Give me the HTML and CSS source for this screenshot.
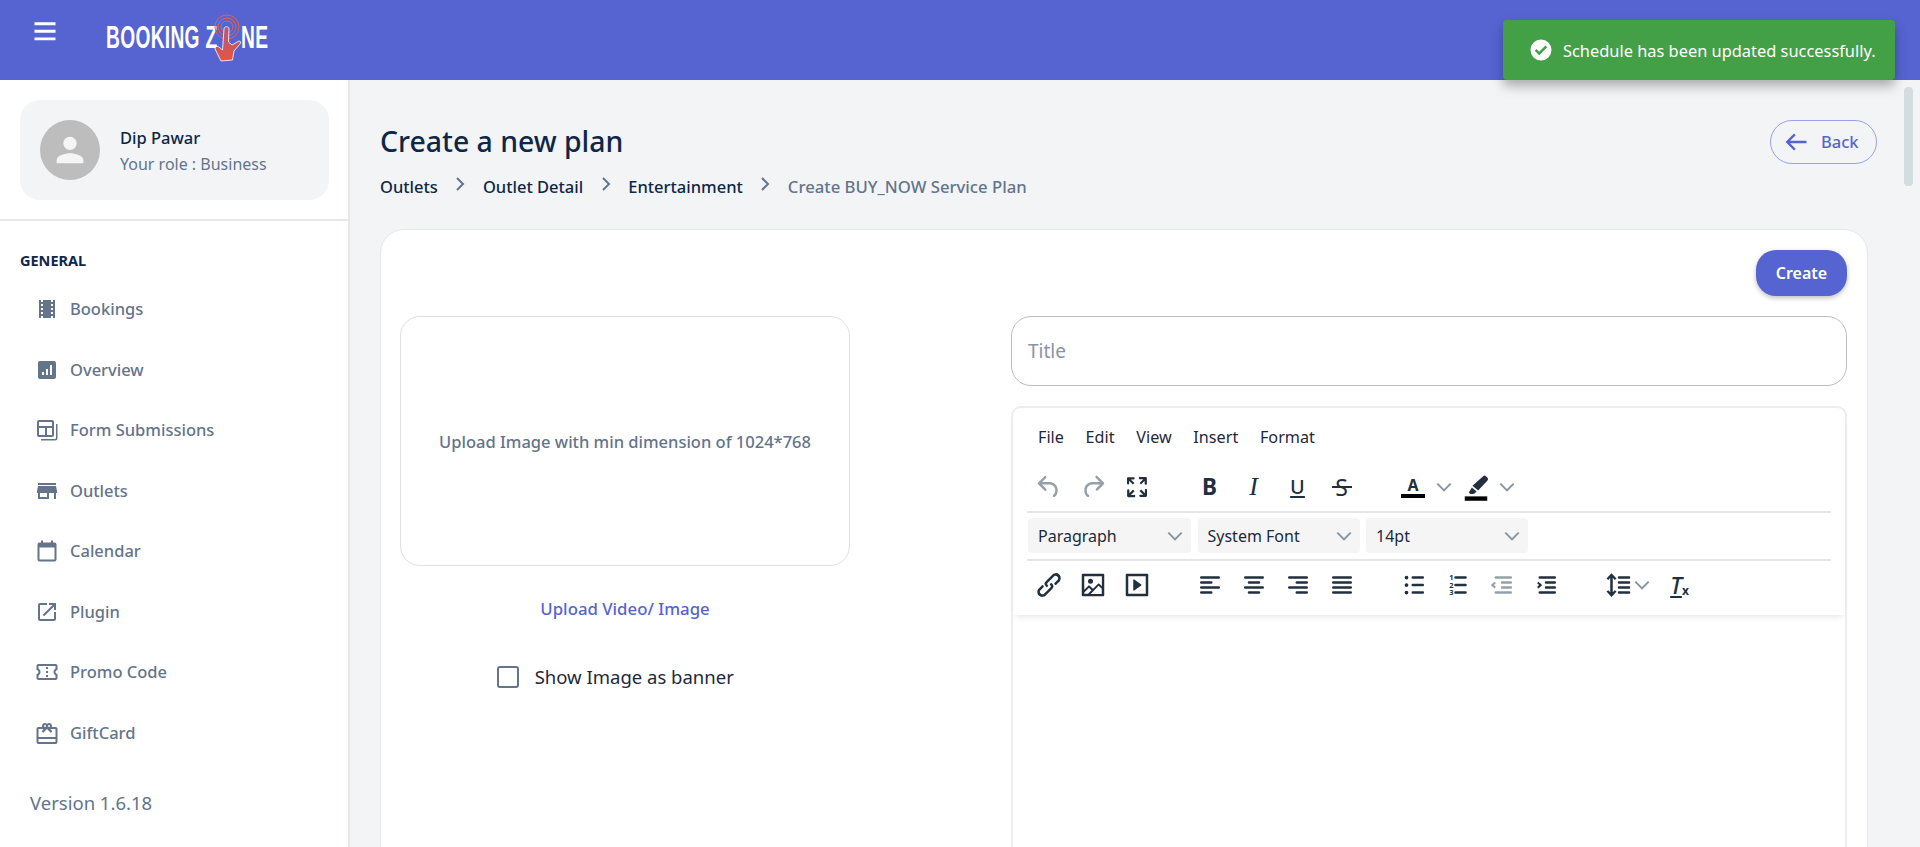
FILE: index.html
```html
<!DOCTYPE html>
<html>
<head>
	<meta charset="utf-8">
	<title>Create a new plan</title>
	<link rel="stylesheet" href="styles.css">
</head>
<body>
<header class="topbar">
	<svg class="burger" viewBox="0 0 24 24"><path d="M3 4.500h18V7H3zM3 11h18v2.500H3zM3 17.500h18V20H3z"/></svg>
	<div class="logo">
		<span class="logoText first">BOOKING Z</span>
		<span class="logoText second">NE</span>
		<svg class="logoHand" viewBox="0 0 30 48">
			<defs>
				<linearGradient id="handFill" x1="0" y1="0" x2="0" y2="1">
					<stop offset="0" stop-color="#a85a8c"/>
					<stop offset="1" stop-color="#e8553c"/>
				</linearGradient>
			</defs>
			<g fill="none" stroke="#e8604a" stroke-width="1">
				<circle cx="15" cy="13" r="12"/>
				<circle cx="15" cy="13" r="9"/>
				<circle cx="15" cy="13" r="6"/>
			</g>
			<path d="M12 15C12 12 17 12 17 15L16.500 28 20 31 27 27C29 27 29 29 28 30L22 37 20.500 46 9 47 3 35C3 32 6 32 7 33L10.500 36z" fill="url(#handFill)" stroke="#fff" stroke-width=".8"/>
		</svg>
	</div>
</header>

<div class="layout">
	<aside class="sidebar">
		<div class="profileWrap">
			<div class="profile">
				<div class="avatar">
					<svg viewBox="0 0 24 24"><path d="M12 12c2.200 0 4-1.800 4-4s-1.800-4-4-4-4 1.800-4 4 1.800 4 4 4zm0 2c-2.700 0-8 1.300-8 4v2h16v-2c0-2.700-5.300-4-8-4z"/></svg>
				</div>
				<div class="profileText">
					<div class="profileName">Dip Pawar</div>
					<div class="profileRole">Your role : Business</div>
				</div>
			</div>
		</div>
		<div class="navTitle">GENERAL</div>
		<ul class="nav">
			<li><svg viewBox="0 0 24 24"><path d="M18 3v2h-2V3H8v2H6V3H4v18h2v-2h2v2h8v-2h2v2h2V3h-2zM8 17H6v-2h2v2zm0-4H6v-2h2v2zm0-4H6V7h2v2zm10 8h-2v-2h2v2zm0-4h-2v-2h2v2zm0-4h-2V7h2v2z"/></svg>Bookings</li>
			<li><svg viewBox="0 0 24 24"><path d="M19 3H5c-1.100 0-2 .9-2 2v14c0 1.100.9 2 2 2h14c1.100 0 2-.9 2-2V5c0-1.100-.9-2-2-2zM9 17H7v-3h2v3zm4 0h-2v-6h2v6zm4 0h-2V7h2v10z"/></svg>Overview</li>
			<li><svg viewBox="0 0 24 24"><path d="M4 2h13a2 2 0 012 2v13a2 2 0 01-2 2H4a2 2 0 01-2-2V4a2 2 0 012-2zm0 2v4h13V4H4zm0 6v7h6v-7H4zm8 0v7h5v-7h-5zM21 6h1.500v14a2.500 2.500 0 01-2.500 2.500H6V21h14a1 1 0 001-1V6z"/></svg>Form Submissions</li>
			<li><svg viewBox="0 0 24 24"><path d="M21 4H3v2h18V4zm1 10v-2l-1-5H3l-1 5v2h1v6h11v-6h5v6h2v-6h1zm-10 4H5v-4h7v4z"/></svg>Outlets</li>
			<li><svg viewBox="0 0 24 24"><path d="M19.500 3.500H18V1.500h-2v2H8v-2H6v2H4.500c-1.100 0-2 .9-2 2v15c0 1.100.9 2 2 2h15c1.100 0 2-.9 2-2v-15c0-1.100-.9-2-2-2zm0 17h-15V8.500h15v12z"/></svg>Calendar</li>
			<li><svg viewBox="0 0 24 24"><path d="M19 19H5V5h7V3H5a2 2 0 00-2 2v14a2 2 0 002 2h14c1.100 0 2-.9 2-2v-7h-2v7zM14 3v2h3.590l-9.830 9.830 1.410 1.410L19 6.410V10h2V3h-7z"/></svg>Plugin</li>
			<li><svg viewBox="0 0 24 24"><path d="M22.500 10V6c0-1.100-.9-2-2-2h-17c-1.100 0-2 .9-2 2v4c1.100 0 2 .9 2 2s-.9 2-2 2v4c0 1.100.9 2 2 2h17c1.100 0 2-.9 2-2v-4c-1.100 0-2-.9-2-2s.9-2 2-2zm-2-1.460c-1.200.69-2 2-2 3.460s.8 2.770 2 3.460V18h-17v-2.540c1.200-.69 2-2 2-3.460s-.8-2.770-2-3.460V6h17v2.540zM11 15h2v2h-2zm0-4h2v2h-2zm0-4h2v2h-2z"/></svg>Promo Code</li>
			<li><svg viewBox="0 0 24 24"><path d="M20.500 6h-3.700c.1-.3.200-.6.200-1 0-1.700-1.300-3-3-3-.9 0-1.500.4-2 1-.5-.6-1.100-1-2-1-1.700 0-3 1.300-3 3 0 .4.100.7.200 1H3.500c-1.100 0-2 .9-2 2v13c0 1.100.9 2 2 2h17c1.100 0 2-.9 2-2V8c0-1.100-.9-2-2-2zM14 4a1 1 0 110 2 1 1 0 010-2zm-4 0a1 1 0 110 2 1 1 0 010-2zm10.500 17h-17v-3h17v3zm0-5h-17V8h5l-1.800 2.600 1.600 1.200L12 8l3.700 3.800 1.600-1.200L15.500 8h5v8z"/></svg>GiftCard</li>
		</ul>
		<div class="version">Version 1.6.18</div>
	</aside>

	<main class="content">
		<div class="pageHead">
			<div>
				<h1>Create a new plan</h1>
				<div class="crumbs">
					<a>Outlets</a>
					<svg viewBox="0 0 16 16"><path d="M5 2l6 6-6 6"/></svg>
					<a>Outlet Detail</a>
					<svg viewBox="0 0 16 16"><path d="M5 2l6 6-6 6"/></svg>
					<a>Entertainment</a>
					<svg viewBox="0 0 16 16"><path d="M5 2l6 6-6 6"/></svg>
					<span>Create BUY_NOW Service Plan</span>
				</div>
			</div>
			<button class="backBtn">
				<svg viewBox="0 0 24 24"><path d="M21 12H5M11 5.500L4.500 12l6.500 6.500"/></svg>
				Back
			</button>
		</div>

		<section class="card">
			<div class="cardHead"><button class="createBtn">Create</button></div>
			<div class="formCols">
				<div class="leftCol">
					<div class="dropBox">Upload Image with min dimension of 1024*768</div>
					<a class="uploadLink">Upload Video/ Image</a>
					<label class="bannerCheck"><i class="box"></i>Show Image as banner</label>
				</div>
				<div class="rightCol">
					<div class="titleInput">Title</div>
					<div class="editor">
						<div class="toolbarWrap">
							<div class="menuRow">
								<span>File</span><span>Edit</span><span>View</span><span>Insert</span><span>Format</span>
							</div>
							<div class="toolRow line">
								<div class="group">
									<b class="tb off"><svg viewBox="0 0 24 24"><path d="M6.400 8H12c3.700 0 6.200 2 6.800 5.100.6 2.700-.4 5.600-2.300 6.800a1 1 0 01-1-1.800c1.100-.6 1.800-2.700 1.400-4.600-.5-2.100-2.100-3.500-4.900-3.500H6.400l3.300 3.300a1 1 0 11-1.400 1.400l-5-5a1 1 0 010-1.400l5-5a1 1 0 011.400 1.400L6.400 8z"/></svg></b>
									<b class="tb off"><svg viewBox="0 0 24 24"><path d="M17.600 10H12c-2.800 0-4.400 1.400-4.900 3.500-.4 2 .3 4 1.400 4.600a1 1 0 11-1 1.800c-2-1.200-2.900-4.100-2.300-6.800.6-3 3-5.100 6.800-5.100h5.600l-3.300-3.300a1 1 0 111.400-1.400l5 5a1 1 0 010 1.400l-5 5a1 1 0 01-1.400-1.400l3.300-3.300z"/></svg></b>
									<b class="tb"><svg viewBox="0 0 24 24"><path d="M15.300 10l-1.200-1.300 2.900-3h-2.300a.9.9 0 110-1.700H19c.5 0 .9.400.9.900v4.400a.9.9 0 11-1.800 0V7l-2.900 3zm0 4l3 3v-2.300a.9.9 0 111.700 0V19c0 .5-.4.900-.9.900h-4.400a.9.9 0 110-1.800H17l-3-2.900 1.300-1.200zM10 15.400l-2.900 3h2.300a.9.9 0 110 1.700H5a.9.9 0 01-.9-.9v-4.400a.9.9 0 111.800 0V17l2.900-3 1.200 1.300zM8.700 10L5.700 7v2.300a.9.9 0 01-1.700 0V5c0-.5.4-.9.900-.9h4.400a.9.9 0 010 1.800H7l3 2.900-1.300 1.200z"/></svg></b>
								</div>
								<div class="group">
									<b class="tb gl glBold">B</b>
									<b class="tb gl glItalic">I</b>
									<b class="tb gl glUnder">U</b>
									<b class="tb gl glStrike">S</b>
								</div>
								<div class="group">
									<b class="tb split"><span class="colorA">A</span><svg class="chev" viewBox="0 0 12 12"><path d="M1 3.500L6 8.500l5-5"/></svg></b>
									<b class="tb split"><svg viewBox="0 0 24 24"><path d="M17.700 3.300a1.500 1.500 0 012.200 0l1.300 1.300a1.500 1.500 0 010 2.100l-7.500 8-4.500-3.800zM8.700 12.300l3.800 3.300-1.700 1.500-1.300.4-1.900.1-1.400-1.300z"/><path d="M3 19.500h18V23H3z" class="black"/></svg><svg class="chev" viewBox="0 0 12 12"><path d="M1 3.500L6 8.500l5-5"/></svg></b>
								</div>
							</div>
							<div class="selectRow line">
								<div class="pick w163">Paragraph<svg class="chev" viewBox="0 0 12 12"><path d="M1 3.500L6 8.500l5-5"/></svg></div>
								<div class="pick w162">System Font<svg class="chev" viewBox="0 0 12 12"><path d="M1 3.500L6 8.500l5-5"/></svg></div>
								<div class="pick w162">14pt<svg class="chev" viewBox="0 0 12 12"><path d="M1 3.500L6 8.500l5-5"/></svg></div>
							</div>
							<div class="toolRow">
								<div class="group">
									<b class="tb"><svg viewBox="0 0 24 24"><path d="M6.200 12.300a1 1 0 011.400 1.400l-2 2a2 2 0 102.800 2.800l4.800-4.800a1 1 0 000-1.400 1 1 0 111.400-1.300 2.900 2.900 0 010 4.100l-4.800 4.800a4 4 0 11-5.600-5.600l2-2zm11.600-.6a1 1 0 01-1.400-1.400l2-2a2 2 0 10-2.800-2.800l-4.800 4.800a1 1 0 000 1.400 1 1 0 11-1.400 1.300 2.900 2.900 0 010-4.100l4.800-4.800a4 4 0 115.600 5.600l-2 2z"/></svg></b>
									<b class="tb"><svg viewBox="0 0 24 24"><path d="M5 15.700l3.300-3.200c.3-.3.700-.3 1 0L12 15l4.100-4c.3-.4.800-.4 1 0l2 1.900V5H5v10.700zM5 18V19h3l2.800-2.900-2-2L5 17.900zm14-3l-2.500-2.400-6.400 6.500H19v-4zM4 3h16c.6 0 1 .4 1 1v16c0 .6-.4 1-1 1H4a1 1 0 01-1-1V4c0-.6.4-1 1-1zm6 8a2 2 0 110-4 2 2 0 010 4z"/></svg></b>
									<b class="tb"><svg viewBox="0 0 24 24"><path d="M4 3h16c.6 0 1 .4 1 1v16c0 .6-.4 1-1 1H4a1 1 0 01-1-1V4c0-.6.4-1 1-1zm1 2v14h14V5H5zm4.800 2.600l5.600 4a.5.5 0 010 .8l-5.600 4A.5.5 0 019 16V8a.5.5 0 01.800-.4z"/></svg></b>
								</div>
								<div class="group">
									<b class="tb"><svg viewBox="0 0 24 24"><path d="M5 5h14a1 1 0 010 2H5a1 1 0 010-2zm0 4h8a1 1 0 010 2H5a1 1 0 010-2zm0 8h8a1 1 0 010 2H5a1 1 0 010-2zm0-4h14a1 1 0 010 2H5a1 1 0 010-2z"/></svg></b>
									<b class="tb"><svg viewBox="0 0 24 24"><path d="M5 5h14a1 1 0 010 2H5a1 1 0 010-2zm3 4h8a1 1 0 010 2H8a1 1 0 010-2zm0 8h8a1 1 0 010 2H8a1 1 0 010-2zm-3-4h14a1 1 0 010 2H5a1 1 0 010-2z"/></svg></b>
									<b class="tb"><svg viewBox="0 0 24 24"><path d="M5 5h14a1 1 0 010 2H5a1 1 0 010-2zm6 4h8a1 1 0 010 2h-8a1 1 0 010-2zm0 8h8a1 1 0 010 2h-8a1 1 0 010-2zm-6-4h14a1 1 0 010 2H5a1 1 0 010-2z"/></svg></b>
									<b class="tb"><svg viewBox="0 0 24 24"><path d="M5 5h14a1 1 0 010 2H5a1 1 0 010-2zm0 4h14a1 1 0 010 2H5a1 1 0 010-2zm0 4h14a1 1 0 010 2H5a1 1 0 010-2zm0 4h14a1 1 0 010 2H5a1 1 0 010-2z"/></svg></b>
								</div>
								<div class="group">
									<b class="tb"><svg viewBox="0 0 24 24"><path d="M11 5h8c.6 0 1 .4 1 1s-.4 1-1 1h-8a1 1 0 010-2zm0 6h8c.6 0 1 .4 1 1s-.4 1-1 1h-8a1 1 0 010-2zm0 6h8c.6 0 1 .4 1 1s-.4 1-1 1h-8a1 1 0 010-2zM4.500 6a1.500 1.500 0 103 0 1.500 1.500 0 00-3 0zm0 6a1.500 1.500 0 103 0 1.500 1.500 0 00-3 0zm0 6a1.500 1.500 0 103 0 1.500 1.500 0 00-3 0z"/></svg></b>
									<b class="tb"><svg viewBox="0 0 24 24"><path d="M10 17h8c.6 0 1 .4 1 1s-.4 1-1 1h-8a1 1 0 010-2zm0-6h8c.6 0 1 .4 1 1s-.4 1-1 1h-8a1 1 0 010-2zm0-6h8c.6 0 1 .4 1 1s-.4 1-1 1h-8a1 1 0 110-2z"/><text x="5" y="8" class="listNum">1</text><text x="5" y="14" class="listNum">2</text><text x="5" y="20" class="listNum">3</text></svg></b>
									<b class="tb off"><svg viewBox="0 0 24 24"><path d="M7 5h12c.6 0 1 .4 1 1s-.4 1-1 1H7a1 1 0 010-2zm5 4h7c.6 0 1 .4 1 1s-.4 1-1 1h-7a1 1 0 010-2zm0 4h7c.6 0 1 .4 1 1s-.4 1-1 1h-7a1 1 0 010-2zm-5 4h12a1 1 0 010 2H7a1 1 0 010-2zm-.900-2.300L3.500 12.500a.7.700 0 010-1l2.600-2.200 1 1.200L5.500 12l1.600 1.500z"/></svg></b>
									<b class="tb"><svg viewBox="0 0 24 24"><path d="M7 5h12c.6 0 1 .4 1 1s-.4 1-1 1H7a1 1 0 010-2zm5 4h7c.6 0 1 .4 1 1s-.4 1-1 1h-7a1 1 0 010-2zm0 4h7c.6 0 1 .4 1 1s-.4 1-1 1h-7a1 1 0 010-2zm-5 4h12a1 1 0 010 2H7a1 1 0 010-2zM5.900 14.700L8.500 12.500a.7.700 0 000-1L5.900 9.300l-1 1.200L6.500 12l-1.600 1.500z"/></svg></b>
								</div>
								<div class="group">
									<b class="tb lineH"><svg viewBox="0 0 24 24"><path d="M12 5h8c.6 0 1 .4 1 1s-.4 1-1 1h-8a1 1 0 010-2zm0 4h8c.6 0 1 .4 1 1s-.4 1-1 1h-8a1 1 0 010-2zm0 4h8c.6 0 1 .4 1 1s-.4 1-1 1h-8a1 1 0 010-2zm0 4h8c.6 0 1 .4 1 1s-.4 1-1 1h-8a1 1 0 010-2zM6 2.500l4 4.300-1.400 1.100L7 6.200v11.600l1.600-1.700L10 17.200l-4 4.300-4-4.300 1.400-1.100L5 17.800V6.200L3.400 7.900 2 6.800z"/></svg><svg class="chev" viewBox="0 0 12 12"><path d="M1 3.500L6 8.500l5-5"/></svg></b>
									<b class="tb clearFmt"><span>T</span><small>x</small></b>
								</div>
							</div>
						</div>
					</div>
				</div>
			</div>
		</section>
	</main>
</div>

<div class="scrollThumb"></div>

<div class="toast">
	<svg viewBox="0 0 24 24"><path d="M12 1.500a10.500 10.500 0 100 21 10.500 10.500 0 000-21zm-1.800 15.700L5.800 12.800l1.700-1.700 2.700 2.700 6.300-6.300 1.700 1.700z"/></svg>
	Schedule has been updated successfully.
</div>
</body>
</html>
```

FILE: styles.css
```css
html,body{height:100%;overflow:hidden;}
body,div,ul,li,h1{margin:0;padding:0;}
body{font:16.500px/24px "Noto Sans","Open Sans",sans-serif;color:#0f2747;background:#f3f4f6;}
ul{list-style-type:none;}
button{font:inherit;cursor:pointer;}
svg{display:block;flex:none;}

.topbar{height:80px;background:#5664d2;display:flex;align-items:center;padding-left:31px;}
.burger{width:28px;height:28px;fill:#fff;margin-top:-19px;}
.logo{position:relative;width:161px;height:46px;margin:-6px 0 0 47px;color:#fff;}
.logoText{position:absolute;top:0;font:700 32px/46px "Liberation Sans",sans-serif;letter-spacing:.5px;white-space:nowrap;transform-origin:0 0;transform:scaleX(.6);}
.logoText.first{left:0;}
.logoText.second{left:135px;}
.logoHand{position:absolute;left:106px;top:0;width:30px;height:48px;}

.layout{display:flex;height:767px;}
.sidebar{width:348px;flex:none;background:#fff;border-right:2px solid #e5e7eb;}
.profileWrap{padding:20px 20px 20px;border-bottom:2px solid #e5e7eb;height:141px;box-sizing:border-box;}
.profile{height:100px;width:309px;background:#f3f4f6;border-radius:20px;display:flex;align-items:center;padding-left:20px;box-sizing:border-box;gap:20px;}
.avatar{width:60px;height:60px;border-radius:50%;background:#bdbdbd;display:flex;align-items:center;justify-content:center;}
.avatar svg{width:40px;height:40px;fill:#f5f5f5;}
.profileText{margin-top:2px;}
.profileName{font-weight:500;line-height:26px;}
.profileRole{color:#64748b;font-size:16px;line-height:26px;}
.navTitle{font-weight:700;font-size:14.500px;line-height:20px;padding:29px 0 0 20px;}
.nav{padding:9px 0 0 35px;}
.nav li{height:60.500px;display:flex;align-items:center;gap:11px;color:#64748b;font-weight:500;}
.nav svg{width:24px;height:24px;fill:#64748b;}
.version{color:#64748b;padding:28px 0 0 30px;font-size:18.500px;}

.content{flex:1;min-width:0;padding:0 52px 0 30px;overflow:hidden;}
.pageHead{display:flex;justify-content:space-between;align-items:flex-start;height:149px;padding-top:39px;box-sizing:border-box;margin-right:-9px;}
.backBtn{margin-top:1px;}
h1{font-size:28.400px;line-height:44px;font-weight:500;}
.crumbs{display:flex;align-items:center;gap:14.500px;margin-top:12px;font-weight:500;}
.crumbs svg{width:16px;height:16px;fill:none;stroke:#64748b;stroke-width:2;margin-top:-6px;}
.crumbs span{color:#64748b;font-size:16.700px;}
.backBtn{width:107px;height:44px;border:1px solid #98a1e8;border-radius:22px;background:transparent;color:#5664d2;display:flex;align-items:center;gap:11px;padding:0 0 0 11px;font-weight:500;}
.backBtn svg{width:28px;height:28px;fill:none;stroke:#5664d2;stroke-width:2;}

.card{background:#fff;border:1px solid #e5e7eb;border-radius:24px;padding:20px 20px 20px 19px;height:700px;box-sizing:border-box;}
.cardHead{display:flex;justify-content:flex-end;height:66px;}
.createBtn{width:91px;height:46px;border:0;border-radius:20px;background:#5664d2;color:#fff;font-weight:600;font-size:16px;box-shadow:0 2px 5px rgba(0,0,0,.25);}
.formCols{display:flex;justify-content:space-between;}
.leftCol{width:450px;display:flex;flex-direction:column;align-items:center;}
.dropBox{width:100%;height:250px;box-sizing:border-box;border:1px solid #e0e0e0;border-radius:20px;padding-top:2px;display:flex;align-items:center;justify-content:center;color:#64748b;font-weight:500;}
.uploadLink{color:#5664d2;font-weight:500;font-size:16.800px;margin-top:31px;}
.bannerCheck{display:flex;align-items:center;gap:15.500px;margin:44px 19px 0 0;font-size:18.500px;color:#1e293b;}
.box{width:18px;height:18px;border:2px solid #64748b;border-radius:3px;}
.rightCol{width:836px;}
.titleInput{height:70px;box-sizing:border-box;border:1px solid #bdbdbd;border-radius:20px;padding:0 16px;line-height:68px;color:#8a94a6;font-size:19px;}
.editor{margin-top:20px;height:500px;border:2px solid #eeeeee;border-radius:10px;box-sizing:border-box;background:#fff;}
.toolbarWrap{height:207px;box-sizing:border-box;padding:0 14px;box-shadow:0 5px 6px -3px rgba(0,0,0,.1);}
.menuRow{display:flex;height:58px;align-items:center;gap:21.700px;padding-left:11px;font-size:16.200px;color:#1e293b;}
.toolRow{display:flex;height:48px;align-items:center;}
.toolRow.line{height:45px;align-items:flex-start;}
.toolRow.line .tb{height:42px;}
.line{border-bottom:2px solid #e5e5e5;}
.group{display:flex;margin-right:28.500px;}
.tb{width:44px;height:34px;display:flex;align-items:center;justify-content:center;}
.tb svg{width:30px;height:30px;fill:#222f3e;}
.tb.off svg{fill:#96a0a8;}
.tb.split{width:63px;justify-content:flex-start;padding-left:9px;gap:13px;box-sizing:border-box;}
.tb.lineH{width:61px;justify-content:flex-start;padding-left:10px;gap:5px;box-sizing:border-box;}
.tb.split svg:first-child,.tb.lineH svg:first-child{margin:0 -3px;}
.tb svg.chev,.chev{width:16px;height:16px;margin:0 -2px;fill:none;stroke:#8c949c;stroke-width:1.500;}
.black{fill:#000;}
.gl{color:#222f3e;position:relative;}
.glBold{font-weight:700;font-size:22.500px;}
.glItalic{font:italic 400 26px "Liberation Serif",serif;}
.glUnder{font-weight:500;font-size:20px;text-decoration:underline;text-underline-offset:2px;}
.glStrike{font-weight:400;font-size:23px;}
.glStrike::after{content:"";position:absolute;left:12px;top:20px;width:20px;height:2px;background:#222f3e;}
.colorA{width:24px;font:700 16px/18px "Noto Sans",sans-serif;color:#222f3e;text-align:center;border-bottom:4px solid #000;}
.listNum{font:700 6px "Noto Sans",sans-serif;fill:#222f3e;}
.clearFmt{color:#222f3e;font:italic 500 23px "Noto Sans",sans-serif;}
.clearFmt span{text-decoration:underline;text-underline-offset:2px;}
.clearFmt small{font:700 12px "Noto Sans",sans-serif;margin-top:11px;}
.selectRow{display:flex;align-items:flex-start;padding:5px 0 0 1px;gap:6.500px;box-sizing:border-box;height:48px;}
.pick{height:35px;background:#f5f5f5;border-radius:4px;box-sizing:border-box;padding:0 10px;display:flex;align-items:center;justify-content:space-between;font-size:16px;color:#1e293b;}
.w163{width:163px;}
.w162{width:162px;}

.scrollThumb{position:absolute;left:1904px;top:87px;width:9px;height:99px;border-radius:4px;background:#d5dce0;}
.toast{position:absolute;left:1503px;top:20px;width:392px;height:60px;box-sizing:border-box;background:#43a047;border-radius:4px;color:#fff;display:flex;align-items:center;gap:10px;padding:2px 0 0 26px;font-size:16.400px;box-shadow:0 6px 12px rgba(0,0,0,.3);}
.toast svg{width:24px;height:24px;fill:#fff;margin-top:-2px;}
```
